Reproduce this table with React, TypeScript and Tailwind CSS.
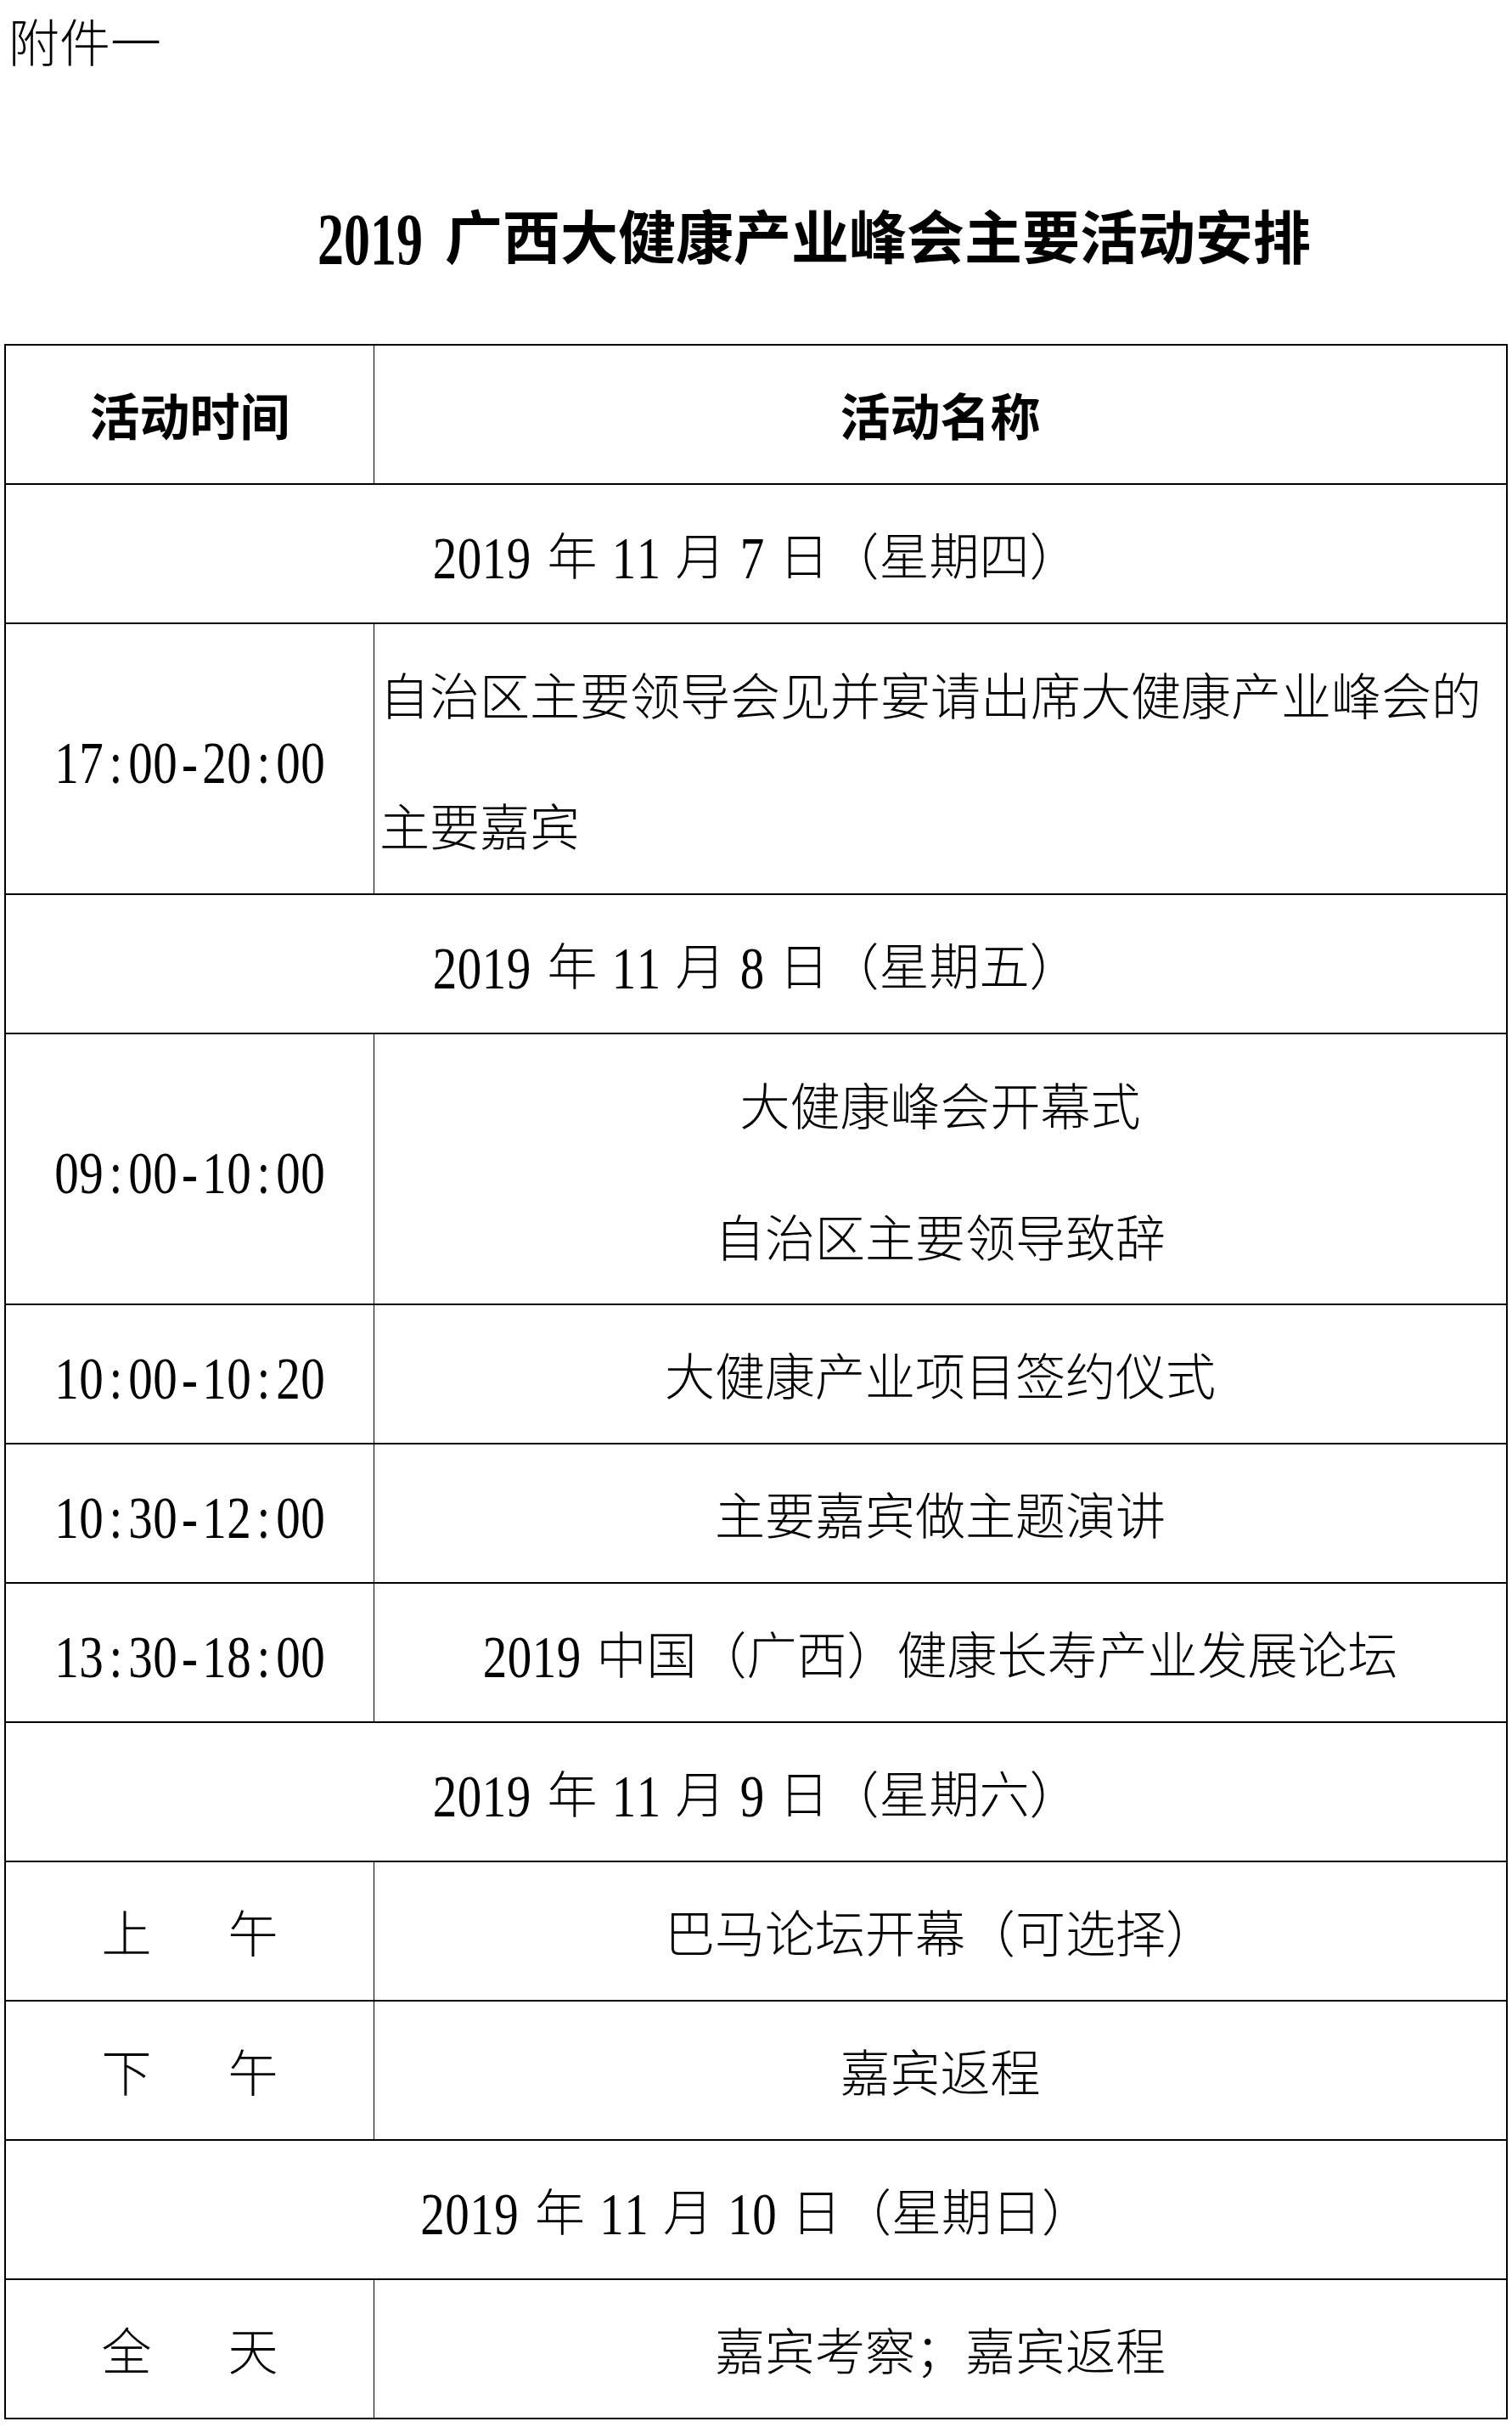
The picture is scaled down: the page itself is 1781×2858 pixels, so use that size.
import { ReactNode } from "react";

const cjk = "font-['Noto_Sans_CJK_SC','Noto_Sans_CJK_JP',sans-serif]";
const serif = "font-['Liberation_Serif','Times_New_Roman',serif]";

// 仿宋式的窄高数字：每个字符等宽，纵向拉伸
function Num({
  s,
  className = "",
  box = "w-[29px] text-[57px] scale-y-[1.22]",
}: {
  s: string;
  className?: string;
  box?: string;
}) {
  return (
    <span className={className}>
      {s.split("").map((c, i) => (
        <span key={i} className={`inline-block text-center leading-none ${serif} ${box}`}>
          {c}
        </span>
      ))}
    </span>
  );
}

function Row({ tall, children }: { tall?: boolean; children: ReactNode }) {
  return (
    <div className={`flex border-b-2 border-black ${tall ? "h-[319px]" : "h-[164px]"}`}>
      {children}
    </div>
  );
}

function TimeCell({ children }: { children: ReactNode }) {
  return (
    <div className="w-[434px] shrink-0 border-r border-black flex items-center justify-center">
      {children}
    </div>
  );
}

function NameCell({ children }: { children: ReactNode }) {
  return <div className="flex-1 flex items-center justify-center">{children}</div>;
}

function DateRow({ day, week }: { day: string; week: string }) {
  return (
    <Row>
      <div className="flex-1 flex items-center justify-center">
        <span className="whitespace-nowrap">
          <Num s="2019" />
          <span className="ml-[19px]">年</span>
          <Num s="11" className="mx-[17px]" />
          月
          <Num s={day} className="mx-[17px]" />
          日（星期{week}）
        </span>
      </div>
    </Row>
  );
}

function Period({ a, b }: { a: string; b: string }) {
  return (
    <TimeCell>
      <span className="flex gap-[90px]">
        <span>{a}</span>
        <span>{b}</span>
      </span>
    </TimeCell>
  );
}

export default function App() {
  return (
    <div className={`w-[1781px] h-[2858px] bg-white text-black font-light ${cjk}`}>
      {/* 页眉 */}
      <div className="h-[405px]">
        <div className="h-[94px] pl-[10px] flex items-center text-[60px] leading-none">附件一</div>
        <div className="mt-[146px] h-[72px] pl-[374px] flex items-center text-[68px] font-bold leading-none whitespace-nowrap">
          <Num s="2019" box="w-[31px] text-[62px] font-bold scale-y-[1.4]" />
          <span className="ml-[26px]">广西大健康产业峰会主要活动安排</span>
        </div>
      </div>

      {/* 日程表 */}
      <div className="mx-[5px] border-x-2 border-t-2 border-black text-[59px]">
        <Row>
          <TimeCell>
            <span className="font-bold">活动时间</span>
          </TimeCell>
          <NameCell>
            <span className="font-bold">活动名称</span>
          </NameCell>
        </Row>

        <DateRow day="7" week="四" />

        <Row tall>
          <TimeCell>
            <Num s="17:00-20:00" />
          </TimeCell>
          <div className="flex-1 flex flex-col justify-center pl-[6px]">
            <div className="leading-[154px] whitespace-nowrap">
              自治区主要领导会见并宴请出席大健康产业峰会的
            </div>
            <div className="leading-[154px]">主要嘉宾</div>
          </div>
        </Row>

        <DateRow day="8" week="五" />

        <Row tall>
          <TimeCell>
            <Num s="09:00-10:00" />
          </TimeCell>
          <div className="flex-1 flex flex-col items-center justify-center">
            <div className="leading-[155px]">大健康峰会开幕式</div>
            <div className="leading-[155px]">自治区主要领导致辞</div>
          </div>
        </Row>

        <Row>
          <TimeCell>
            <Num s="10:00-10:20" />
          </TimeCell>
          <NameCell>大健康产业项目签约仪式</NameCell>
        </Row>

        <Row>
          <TimeCell>
            <Num s="10:30-12:00" />
          </TimeCell>
          <NameCell>主要嘉宾做主题演讲</NameCell>
        </Row>

        <Row>
          <TimeCell>
            <Num s="13:30-18:00" />
          </TimeCell>
          <NameCell>
            <span className="whitespace-nowrap">
              <Num s="2019" className="mr-[18px]" />
              中国（广西）健康长寿产业发展论坛
            </span>
          </NameCell>
        </Row>

        <DateRow day="9" week="六" />

        <Row>
          <Period a="上" b="午" />
          <NameCell>巴马论坛开幕（可选择）</NameCell>
        </Row>

        <Row>
          <Period a="下" b="午" />
          <NameCell>嘉宾返程</NameCell>
        </Row>

        <DateRow day="10" week="日" />

        <Row>
          <Period a="全" b="天" />
          <NameCell>嘉宾考察；嘉宾返程</NameCell>
        </Row>
      </div>
    </div>
  );
}
